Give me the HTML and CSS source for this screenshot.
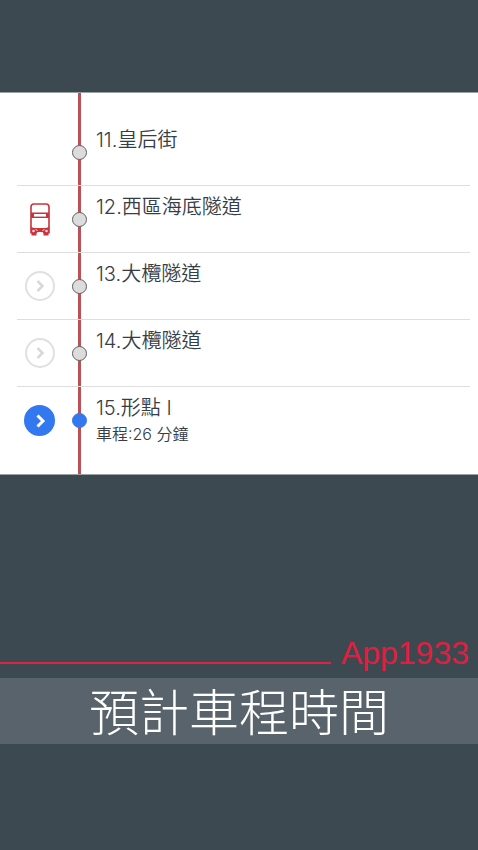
FILE: index.html
```html
<!DOCTYPE html>
<html lang="zh-Hant-HK">
<head>
<meta charset="utf-8">
<meta name="viewport" content="width=device-width, initial-scale=1">
<title>預計車程時間</title>
<link rel="stylesheet" href="styles.css">
</head>
<body>
<main class="page">
  <ol class="stops">
    <li class="stop">
      <span class="marker"></span>
      <span class="track"><span class="dot"></span></span>
      <div class="info"><p class="name">11.皇后街</p></div>
    </li>
    <li class="stop">
      <span class="marker">
        <svg class="bus" width="22" height="34" viewBox="0 0 22 34" aria-hidden="true">
          <path d="M2 25V5Q2 2 5 2H17Q20 2 20 5V25" fill="none" stroke="#c8343c" stroke-width="1.6"/>
          <path d="M2 10.500H20V16H2Z" fill="#c8343c"/>
          <path d="M5 12H17V14.600H5Z" fill="#fff"/>
          <path d="M1.200 24Q3 26 6 26H16Q19 26 20.800 24V31.500H19.500V33.500H14.500V31.500L13.500 30H8.500L7.500 31.500V33.500H2.500V31.500H1.200Z" fill="#c8343c"/>
          <circle cx="4.500" cy="29" r="1.300" fill="#f6d5d6"/><circle cx="17.500" cy="29" r="1.300" fill="#f6d5d6"/>
          <path d="M6.500 27L8.500 29M15.500 27L13.500 29" stroke="#f6d5d6" stroke-width="1"/>
        </svg>
      </span>
      <span class="track"><span class="dot"></span></span>
      <div class="info"><p class="name">12.西區海底隧道</p></div>
    </li>
    <li class="stop">
      <span class="marker"><button class="go" type="button" aria-label="13.大欖隧道"><svg width="12" height="14" viewBox="0 0 12 14" aria-hidden="true"><path d="M3.500 2L8.500 7L3.500 12"/></svg></button></span>
      <span class="track"><span class="dot"></span></span>
      <div class="info"><p class="name">13.大欖隧道</p></div>
    </li>
    <li class="stop">
      <span class="marker"><button class="go" type="button" aria-label="14.大欖隧道"><svg width="12" height="14" viewBox="0 0 12 14" aria-hidden="true"><path d="M3.500 2L8.500 7L3.500 12"/></svg></button></span>
      <span class="track"><span class="dot"></span></span>
      <div class="info"><p class="name">14.大欖隧道</p></div>
    </li>
    <li class="stop selected">
      <span class="marker"><button class="go" type="button" aria-label="15.形點 I"><svg width="12" height="14" viewBox="0 0 12 14" aria-hidden="true"><path d="M3.500 1.500L9 7L3.500 12.500"/></svg></button></span>
      <span class="track"><span class="dot"></span></span>
      <div class="info"><p class="name">15.形點 I</p><p class="time">車程:26 分鐘</p></div>
    </li>
  </ol>
  <footer class="caption">
    <div class="brand"><span class="rule"></span><span class="app">App1933</span></div>
    <h1 class="title">預計車程時間</h1>
  </footer>
</main>
</body>
</html>
```

FILE: styles.css
```css
* { box-sizing: border-box; }

body {
  margin: 0;
  background: #3d4951;
  font-family: Inter, "Noto Sans CJK TC", sans-serif;
  color: #363e45;
}

p, h1 { margin: 0; }

.page {
  min-height: 100vh;
  padding-top: 92px;
}

.stops {
  list-style: none;
  margin: 0;
  padding: 26px 8px 20px 17px;
  background: linear-gradient(#bc5057, #bc5057) 78px 0 / 3px 100% no-repeat #fff;
  border-bottom: 1px solid #9aa2a4;
  border-top: 1px solid #9aa2a4;
}

.stop {
  display: grid;
  grid-template-columns: 45px 34px 1fr;
  height: 67px;
  border-bottom: 1px solid #dedede;
}

.stop:last-child { border-bottom: 0; }

.marker, .track {
  display: flex;
  align-items: center;
  justify-content: center;
}

.dot {
  width: 15px;
  height: 15px;
  border: 1px solid #606060;
  border-radius: 50%;
  background: #dcdcdc;
}

.go {
  display: flex;
  align-items: center;
  justify-content: center;
  width: 30px;
  height: 30px;
  padding: 0;
  border: 2px solid #e0e0e0;
  border-radius: 50%;
  background: #fff;
  color: #d8d8d8;
}

.go path {
  fill: none;
  stroke: currentColor;
  stroke-width: 2.5;
}

.selected .go {
  width: 31px;
  height: 31px;
  border-color: #3478f0;
  background: #3478f0;
  color: #fff;
}

.selected .go path { stroke-width: 3; }

.selected .dot {
  border-color: #3478f0;
  background: #3478f0;
}

.info { padding-top: 7px; }

.name {
  font-size: 20px;
  line-height: 28px;
  font-weight: 350;
}

.time {
  font-size: 16px;
  line-height: 24px;
  font-weight: 350;
}

.caption { padding-top: 160px; }

.brand {
  display: flex;
  align-items: center;
  gap: 10px;
  height: 36px;
  padding-right: 9px;
  color: #e01f40;
}

.rule {
  flex: 1;
  height: 2px;
  margin-top: 20px;
  background: #dc2544;
}

.app {
  font-family: "Liberation Sans", Arial, sans-serif;
  font-size: 32px;
  line-height: 36px;
}

.title {
  margin-top: 7px;
  padding-bottom: 4px;
  background: #59636b;
  color: #fff;
  font-family: "Noto Sans CJK TC", sans-serif;
  font-size: 50px;
  line-height: 62px;
  font-weight: 300;
  text-align: center;
}
```
